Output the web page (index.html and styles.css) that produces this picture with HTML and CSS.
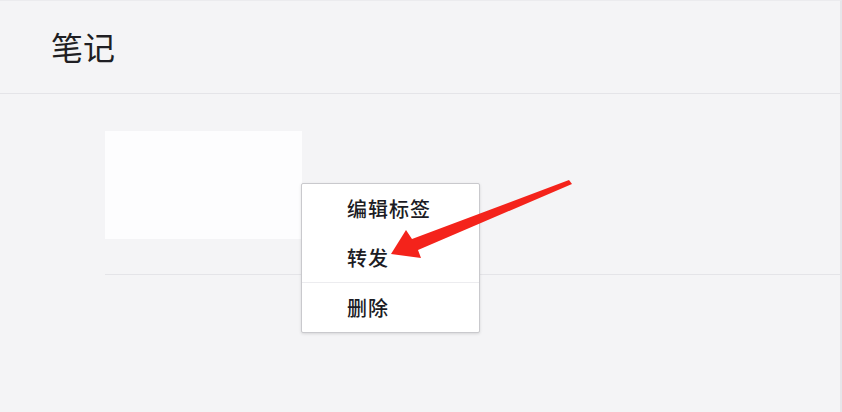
FILE: index.html
```html
<!DOCTYPE html>
<html lang="zh-CN">
<head>
  <meta charset="UTF-8">
  <title>笔记</title>
  <link rel="stylesheet" href="styles.css">
</head>
<body>
  <div class="page">
    <header class="header">
      <h1>笔记</h1>
    </header>
    <div class="list">
      <div class="note">
        <div class="thumb"></div>
      </div>
    </div>

    <ul class="menu">
      <li>编辑标签</li>
      <li>转发</li>
      <li class="sep"></li>
      <li>删除</li>
    </ul>

    <svg class="arrow" width="842" height="412" viewBox="0 0 842 412">
      <polygon points="391,253 406,229 412,238 569,179 572,183 418,249 421,257" fill="#f4231b"/>
    </svg>
  </div>
</body>
</html>
```

FILE: styles.css
```css
html, body {
  margin: 0;
  padding: 0;
}
body {
  font-family: "Noto Sans CJK SC", "Noto Sans", sans-serif;
  background-color: #f4f4f6;
  color: #1f1f24;
}
.page {
  position: relative;
  width: 842px;
  height: 412px;
  overflow: hidden;
  box-sizing: border-box;
  border-top: 1px solid #ebebee;
  border-right: 2px solid #e6e6ea;
}
.header {
  height: 92px;
  border-bottom: 1px solid #e4e4e8;
  display: flex;
  align-items: center;
  padding-left: 51px;
}
.header h1 {
  margin: 0;
  font-size: 32px;
  font-weight: 400;
  line-height: 1;
  margin-top: -2px;
}
.list {
  padding-left: 105px;
  padding-top: 37px;
}
.note {
  height: 143px;
  border-bottom: 1px solid #e4e4e8;
}
.thumb {
  width: 197px;
  height: 108px;
  background: #fdfdfe;
}
.menu {
  position: absolute;
  left: 301px;
  top: 182px;
  width: 177px;
  margin: 0;
  padding: 0;
  list-style: none;
  background: #fff;
  border: 1px solid #c9c9cd;
  border-radius: 2px;
  box-shadow: 0 1px 3px rgba(0, 0, 0, 0.12);
}
.menu li {
  height: 49px;
  line-height: 49px;
  padding-left: 45px;
  font-size: 20px;
  letter-spacing: 1px;
  font-weight: 500;
  color: #1c1c24;
}
.menu li.sep {
  height: 1px;
  background: #ececef;
}
.arrow {
  position: absolute;
  left: 0;
  top: 0;
}
```
